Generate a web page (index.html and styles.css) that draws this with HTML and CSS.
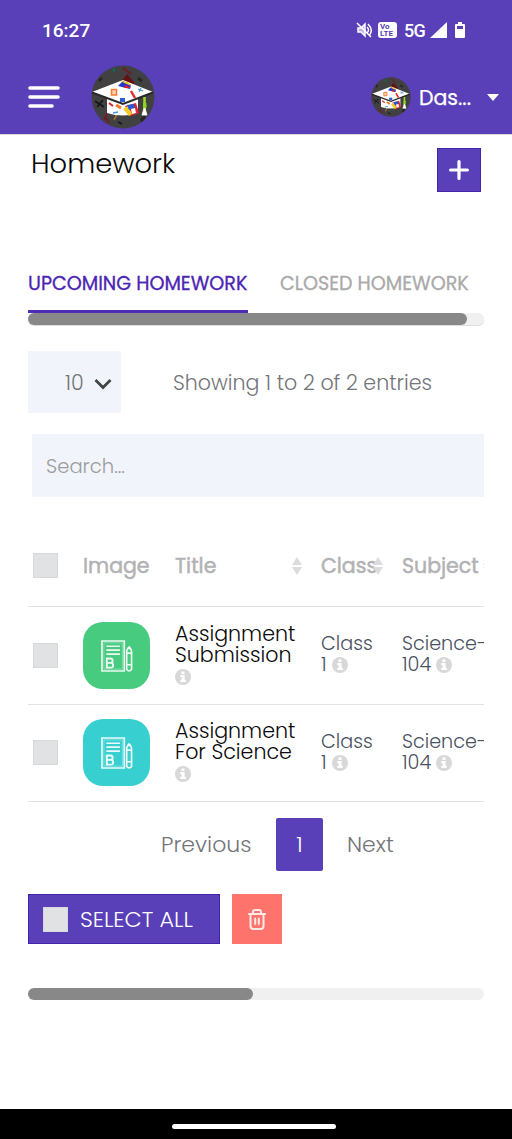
FILE: index.html
```html
<!DOCTYPE html>
<html lang="en">
<head>
<meta charset="utf-8">
<title>Homework</title>
<link rel="stylesheet" href="styles.css">
</head>
<body>
<svg class="defs" width="0" height="0">
  <symbol id="logo" viewBox="0 0 64 64">
    <circle cx="32" cy="32" r="31.5" fill="#414141"/>
    <g fill="none" stroke-width="1.6">
      <path d="M32 3l8 6M14 52l4 6M19 45l-6 9" stroke="#7a1622"/>
      <path d="M8 16l3-3M47 13l4 3M50 56l4-5" stroke="#262626" stroke-width="3"/>
      <path d="M22 6l2-2" stroke="#126b55" stroke-width="2.5"/>
      <path d="M4 36l9 6M6 42l6-7M27 57l4 2" stroke="#151515"/>
      <path d="M23 55l3-6" stroke="#a77a35"/>
    </g>
    <path d="M30 17l6-8 7 8-1 5z" fill="#641014"/>
    <path d="M16 32v16q16 5 31 0V32z" fill="#fff"/>
    <path d="M1 27l31-12 30 12-30 11z" fill="#fff"/>
    <path d="M1 27.500l31 11.500 30-11.500" fill="none" stroke="#292929" stroke-width="2"/>
    <path d="M27 21l5-5 8 4-1 4z" fill="#2337cf"/><path d="M29 16l8 1 3 4z" fill="#f0cd17"/><path d="M34 20l6 3-7 0z" fill="#e51c23"/>
    <path d="M20.500 24.500h5v5.500h-5z" fill="#fbd0b5" stroke="#f47b35" stroke-width="1.500"/>
    <path d="M40 26l4 7" stroke="#e52d2d" stroke-width="2.500"/><path d="M47 24l5 2M50 23l-2 4" stroke="#4a90d5" stroke-width="1.200"/>
    <path d="M29 33h5v4h-5z" fill="#315ed3"/>
    <path d="M34 41l11-3 3 10-9 3z" fill="#e7202b"/><path d="M32 44l5-3 4 8-3 2z" fill="#f4ce26"/><path d="M36 40l7-1 1 4-6 2z" fill="#2459d7"/><path d="M40 44l4-1 1 5-4 1z" fill="#fff"/>
    <path d="M25 40l5 3" stroke="#ef7b27" stroke-width="3"/><path d="M18 38l4 3" stroke="#d5262c" stroke-width="2"/><path d="M22 48l5-1" stroke="#4a90d5" stroke-width="1.500"/>
    <path d="M53.500 32v18" stroke="#9bdc27" stroke-width="2.500"/><path d="M53.500 42l2.500 8h-5z" fill="#fff" stroke="#f5f5e9"/><path d="M52 38h3.500v5H52z" fill="#8bd51f"/>
  </symbol>
  <symbol id="paper" viewBox="0 0 34 34">
    <g fill="none" stroke="#fff" stroke-opacity=".9" stroke-width="1.700">
      <path d="M1 1.500h23v31H1z"/><path d="M3 3.500h19v27H3z" stroke-opacity=".35" stroke-width="1"/>
      <path d="M5.500 7h14M5.500 11h14M5.500 15h14"/>
      <path d="M6 19.500h3.500q2.500 0 2.500 2.300t-2.500 2.300H6h4q2.500 0 2.500 2.500T10 29H6z" stroke-width="2"/>
      <path d="M26.500 12q2.500-8 5 0v19q-2.500 3-5 0zM26.500 14h5M26.500 26h5M29 7v3"/>
    </g>
  </symbol>
  <symbol id="info" viewBox="0 0 16 16">
    <circle cx="8" cy="8" r="8" fill="#d8d8d8"/>
    <path d="M6.500 2.500h3v2.500h-3zM5.300 6h4.300v4.800h1.300v2.200H5.300v-2.200h1.400V8.200H5.300z" fill="#fff"/>
  </symbol>
  <symbol id="sort" viewBox="0 0 10 18">
    <path d="M5 0l5 8H0zM0 10h10l-5 8z" fill="#dcdcde"/>
  </symbol>
</svg>

<header class="top">
  <div class="status">
    <span class="clock">16:27</span>
    <div class="signals">
      <svg class="mute" width="17" height="16" viewBox="0 0 17 16" fill="none" stroke="#fff" stroke-width="1.500">
        <path d="M2 6h3l4-4v12L5 10H2z" fill="#fff" fill-opacity=".6"/><path d="M11 5q3 3 0 6M12 2q6 6 1 12M1 1l14 14"/>
      </svg>
      <span class="volte"><span>Vo</span><span>LTE</span></span>
      <span class="net">5G</span>
      <svg class="bars" width="17" height="16" viewBox="0 0 17 16"><path d="M17 0v16H0z" fill="#fff"/></svg>
      <svg width="10" height="16" viewBox="0 0 10 16">
        <path fill="#fff" fill-rule="evenodd" d="M3 0h4v2h2q1 0 1 1v12q0 1-1 1H1q-1 0-1-1V3q0-1 1-1h2zM2 4v3h6V4z"/>
      </svg>
    </div>
  </div>
  <div class="navbar">
    <svg class="burger" width="32" height="24" viewBox="0 0 32 24" stroke="#fff" stroke-width="3.600" stroke-linecap="round"><path d="M2 3h28M2 12h28M2 21h22"/></svg>
    <svg class="logo" width="64" height="64"><use href="#logo"/></svg>
    <svg class="avatar" width="40" height="40"><use href="#logo"/></svg>
    <span class="user">Das...</span>
    <svg class="caret" width="12" height="7" viewBox="0 0 12 7"><path d="M0 0h12L6 7z" fill="#fff"/></svg>
  </div>
</header>

<main class="page">
  <div class="heading">
    <h1>Homework</h1>
    <button class="add"><svg width="20" height="20" viewBox="0 0 20 20" stroke="#fff" stroke-width="3.200" stroke-linecap="round"><path d="M10 1.600v16.800M1.600 10h16.800"/></svg></button>
  </div>

  <nav class="tabs">
    <a class="tab active">UPCOMING HOMEWORK</a>
    <a class="tab closed">CLOSED HOMEWORK</a>
  </nav>
  <div class="scroll scroll-tabs"><div class="thumb"></div></div>

  <div class="tools">
    <div class="select"><span>10</span><svg width="18" height="12" viewBox="0 0 18 12" fill="none" stroke="#444" stroke-width="2.800"><path d="M1.500 2L9 9.500 16.500 2"/></svg></div>
    <span class="showing">Showing 1 to 2 of 2 entries</span>
  </div>
  <div class="search"><span>Search...</span></div>

  <div class="table">
    <div class="row head">
      <span class="box"></span>
      <span>Image</span>
      <span class="with-sort"><span>Title</span><svg width="10" height="18"><use href="#sort"/></svg></span>
      <span class="with-sort class-head"><span>Class</span><svg width="10" height="18"><use href="#sort"/></svg></span>
      <span class="with-sort subject-head"><span>Subject</span><svg width="10" height="18"><use href="#sort"/></svg></span>
    </div>
    <div class="row">
      <span class="box"></span>
      <span class="tile green"><svg width="33" height="34"><use href="#paper"/></svg></span>
      <div class="title">Assignment<br>Submission<br><svg class="info"><use href="#info"/></svg></div>
      <div class="cell">Class<br>1 <svg class="info"><use href="#info"/></svg></div>
      <div class="cell"><span>Science-</span><br>104 <svg class="info"><use href="#info"/></svg></div>
    </div>
    <div class="row">
      <span class="box"></span>
      <span class="tile teal"><svg width="33" height="34"><use href="#paper"/></svg></span>
      <div class="title">Assignment<br>For Science<br><svg class="info"><use href="#info"/></svg></div>
      <div class="cell">Class<br>1 <svg class="info"><use href="#info"/></svg></div>
      <div class="cell"><span>Science-</span><br>104 <svg class="info"><use href="#info"/></svg></div>
    </div>
  </div>

  <div class="pager">
    <span class="prev">Previous</span><span class="current">1</span><span class="next">Next</span>
  </div>

  <div class="actions">
    <button class="select-all"><span class="box"></span><span class="label">SELECT ALL</span></button>
    <button class="delete"><svg width="18" height="21" viewBox="0 0 18 21" fill="none" stroke="#ffe9e7" stroke-width="2" stroke-linecap="round" stroke-linejoin="round"><path d="M1 5h16M5 5V3q0-2 2-2h4q2 0 2 2v2M2.500 5v12q0 3 3 3h7q3 0 3-3V5M7.200 9.500v5.500M10.800 9.500v5.500"/></svg></button>
  </div>
  <div class="scroll scroll-table"><div class="thumb"></div></div>
</main>
<footer class="gesture"><span class="pill"></span></footer>
</body>
</html>
```
FILE: styles.css
```css
* { box-sizing: border-box; }
body {
  margin: 0; width: 512px; height: 1139px; overflow: hidden;
  display: flex; flex-direction: column; background: #fff;
  font-family: Poppins, Inter, "Open Sans", sans-serif; font-size: 20.600px; font-weight: 300; color: #737579;
}
svg { display: block; flex: none; }
.defs { position: absolute; }
button { border: 0; padding: 0; font: inherit; display: flex; align-items: center; justify-content: center; }
span { white-space: nowrap; }

.top { height: 134px; background: #593fb8; color: #fff; flex: none; }
.status { height: 60px; display: flex; justify-content: space-between; align-items: center; padding: 0 47px 0 42px; font-family: Roboto, sans-serif; font-weight: 500; font-size: 19px; }
.signals { display: flex; align-items: center; }
.volte { width: 19px; height: 16px; margin-left: 5px; border-radius: 3px; background: #fff; color: #593fb8; font-size: 8px; line-height: 7px; font-weight: 700; padding: 1px 0 0 2px; display: flex; flex-direction: column; }
.net { margin-left: 7px; font-size: 18px; width: 21px; letter-spacing: -.7px; }
.bars { margin: 0 8px 0 5px; }
.navbar { height: 74px; display: flex; align-items: center; padding: 0 13px 0 28px; }
.logo { margin-left: 31px; }
.avatar { margin-left: 216px; }
.user { margin-left: 8px; font-size: 20.500px; font-weight: 400; width: 52px; -webkit-text-stroke: .25px #fff; }
.caret { margin-left: auto; }

.page { flex: 1; padding: 0 28px; display: flex; flex-direction: column; border-top: 1px solid #d9d5e5; }
.heading { display: flex; justify-content: space-between; align-items: flex-start; padding: 13px 3px 0; height: 124px; }
h1 { margin: 0; font-size: 27.400px; font-weight: 300; line-height: 32px; color: #0a0a0a; }
.add { width: 44px; height: 44px; background: #593fb8; border: 1px solid #4525b0; }

.tabs { display: flex; gap: 32px; height: 54px; font-size: 19.100px; font-weight: 400; }
.tab { line-height: 49px; color: #aaa; white-space: nowrap; width: 190px; -webkit-text-stroke: .3px currentColor; }
.tab.active { width: 220px; color: #4b25b4; border-bottom: 3px solid #4e2db6; }
.scroll { width: 456px; height: 12px; border-radius: 6px; background: #f0f0f0; }
.thumb { height: 12px; border-radius: 6px; background: #888; }
.scroll-tabs .thumb { width: 439px; }
.scroll-tabs { box-shadow: 0 1px 0 #ddd; }

.tools { display: flex; margin-top: 26px; align-items: center; }
.select { width: 93px; height: 62px; background: #f1f4fa; display: flex; align-items: center; padding-left: 37px; }
.select svg { margin: 4px 9px 0 auto; }
.showing { margin-left: 52px; }
.search { margin: 21px 0 0 4px; height: 63px; background: #f1f4fa; display: flex; align-items: center; padding-left: 14px; font-size: 19.600px; color: #9c9c9e; flex: none; }

.table { margin-top: 28px; overflow: hidden; }
.row { display: grid; grid-template-columns: 55px 92px 146px 81px 90px; height: 98px; align-items: center; border-bottom: 1px solid #e3e3e5; color: #4a5160; line-height: 21px; }
.row + .row { height: 97.500px; }
.row.head { height: 82px; color: #b2b2b4; font-size: 20.500px; font-weight: 400; -webkit-text-stroke: .5px #b2b2b4; }
.row > .box { margin-left: 5px; }
.box { display: block; width: 25px; height: 25px; background: #e1e2e4; border: 1px solid #d7d8dc; }
.with-sort { display: flex; align-items: center; }
.with-sort svg { margin-left: auto; margin-right: 19px; }
.class-head svg { margin: 0 0 0 -4px; }
.subject-head svg { margin: 0 0 0 4px; }
.tile { width: 67px; height: 67px; border-radius: 20px; display: flex; align-items: center; justify-content: center; }
.tile svg { margin-left: 1px; margin-top: 1px; }
.green { background: #46cb7f; }
.teal { background: #38cfd1; }
.title { color: #0a0a0a; padding-bottom: 2px; }
.cell { font-size: 19.200px; padding-bottom: 2px; }
.info { width: 16px; height: 16px; display: inline-block; vertical-align: -2px; }

.pager { display: flex; align-items: center; height: 53px; margin-top: 16px; font-size: 22px; }
.prev { margin-left: 133px; width: 115px; }
.current { width: 47px; height: 53px; border-radius: 2px; background: #593fb8; color: #fff; display: flex; align-items: center; justify-content: center; }
.next { margin-left: 24px; }
.actions { display: flex; gap: 12px; margin-top: 23px; }
.select-all { width: 192px; height: 50px; background: #593fb8; border: 1px solid #4525b0; color: #fff; justify-content: flex-start; padding-left: 14px; font-size: 22.300px; }
.label { margin-left: 12px; }
.delete { width: 50px; height: 50px; background: #ff736d; }
.scroll-table { margin-top: 44px; }
.scroll-table .thumb { width: 225px; }
.gesture { height: 30px; background: #000; display: flex; justify-content: center; padding: 15px 4px 0 0; flex: none; }
.pill { width: 164px; height: 5px; border-radius: 3px; background: #fff; }
```
